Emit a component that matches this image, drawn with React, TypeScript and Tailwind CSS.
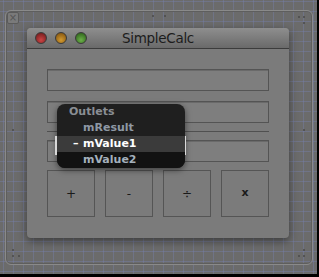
import React from "react";

const Dot = ({ x, y }: { x: number; y: number }) => (
  <div
    className="absolute w-[2px] h-[2px] rounded-full bg-[#4a4a4a]"
    style={{ left: x, top: y }}
  />
);

const Light = ({ from, to }: { from: string; to: string }) => (
  <div
    className="w-[12px] h-[12px] rounded-full border border-[#3a3a3a]"
    style={{ background: `radial-gradient(circle at 50% 70%, ${from} 0%, ${to} 80%)` }}
  />
);

const Field = () => (
  <div className="h-[22px] border border-[#545454] bg-[#7e7e7e] shadow-[inset_0_1px_0_#6a6a6a]" />
);

const Btn = ({ label, bold }: { label: string; bold?: boolean }) => (
  <div
    className={
      bold
        ? "w-[48px] h-[47px] border border-[#555] flex items-center justify-center text-[11px] font-bold text-[#1a1a1a] font-['DejaVu_Sans',sans-serif]"
        : "w-[48px] h-[47px] border border-[#555] flex items-center justify-center text-[12px] text-[#1a1a1a] font-['DejaVu_Sans',sans-serif]"
    }
  >
    {label}
  </div>
);

export default function App() {
  return (
    <div className="w-[319px] h-[277px] bg-black overflow-hidden">
      <div className="relative w-[317px] h-[274px] bg-[#6b6b6b] bg-[linear-gradient(to_right,rgba(120,132,185,0.36)_1px,transparent_1px),linear-gradient(to_bottom,rgba(120,132,185,0.36)_1px,transparent_1px)] bg-[size:10px_10px] bg-[position:3px_1px] pt-[10px] pl-[5px]">
        {/* frame */}
        <div className="relative w-[308px] h-[255px] rounded-[6px] border border-[#8a8a8a] shadow-[inset_0_0_0_1px_#5e5e5e] pt-[17px] pl-[21px]">
          <div className="absolute left-[1px] top-[1px] w-[12px] h-[12px] rounded-[2px] bg-[#7a7a7a] border border-[#5a5a5a] flex items-center justify-center text-[10px] leading-none text-[#555] font-['DejaVu_Sans',sans-serif]">
            ×
          </div>
          {/* window */}
          <div className="w-[262px] h-[210px] rounded-[4px] bg-[#7b7b7b] shadow-[0_3px_8px_rgba(0,0,0,0.45)] overflow-hidden flex flex-col">
            <div className="relative h-[21px] shrink-0 bg-[linear-gradient(to_bottom,#8e8e8e,#6a6a6a)] border-b border-[#3c3c3c] flex items-center pl-[8px] gap-[8px]">
              <Light from="#c44" to="#7a1f1f" />
              <Light from="#d39a30" to="#8a5a12" />
              <Light from="#6cb04a" to="#336a1e" />
              <div className="absolute inset-0 flex items-center justify-center text-[13.5px] text-[#1c1c1c] font-['DejaVu_Sans',sans-serif] tracking-[-0.3px]">
                SimpleCalc
              </div>
            </div>
            <div className="flex flex-col px-[20px] pt-[20px]">
              <Field />
              <div className="h-[10px]" />
              <Field />
              <div className="h-[8px]" />
              <div className="h-[1px] bg-[#505050]" />
              <div className="h-[8px]" />
              <Field />
              <div className="h-[8px]" />
              <div className="flex gap-[10px]">
                <Btn label="+" />
                <Btn label="-" />
                <Btn label="÷" />
                <Btn label="x" bold />
              </div>
            </div>
          </div>
          <Dot x={292} y={5} />
          <Dot x={297} y={5} />
          <Dot x={297} y={11} />
          <Dot x={146} y={4} />
          <Dot x={158} y={4} />
          <Dot x={6} y={118} />
          <Dot x={297} y={118} />
          <Dot x={6} y={238} />
          <Dot x={6} y={244} />
          <Dot x={12} y={244} />
          <Dot x={292} y={244} />
          <Dot x={297} y={244} />
          <Dot x={297} y={238} />
        </div>

        {/* outlets HUD */}
        <div className="absolute left-[57px] top-[104px] w-[128px] h-[64px] rounded-[8px] bg-[#1f1f1f] shadow-[0_2px_6px_rgba(0,0,0,0.5)] font-['DejaVu_Sans',sans-serif] text-[11px] font-bold leading-[16px]">
          <div className="h-[16px] pl-[12px] text-[#8a8e94]">Outlets</div>
          <div className="h-[16px] pl-[26px] text-[#8e98a4]">mResult</div>
          <div className="relative h-[16px] bg-[#3b3b3b] pl-[16px] text-white flex">
            <span className="w-[10px]">–</span>
            <span>mValue1</span>
            <div className="absolute left-[-2px] top-0 w-[2px] h-[19px] bg-[#d8d8d8]" />
            <div className="absolute right-[-1px] top-0 w-[1px] h-[19px] bg-[#d8d8d8]" />
          </div>
          <div className="h-[16px] pl-[26px] text-[#a4b0bc] bg-[#121212] rounded-b-[8px]">mValue2</div>
        </div>
      </div>
    </div>
  );
}
